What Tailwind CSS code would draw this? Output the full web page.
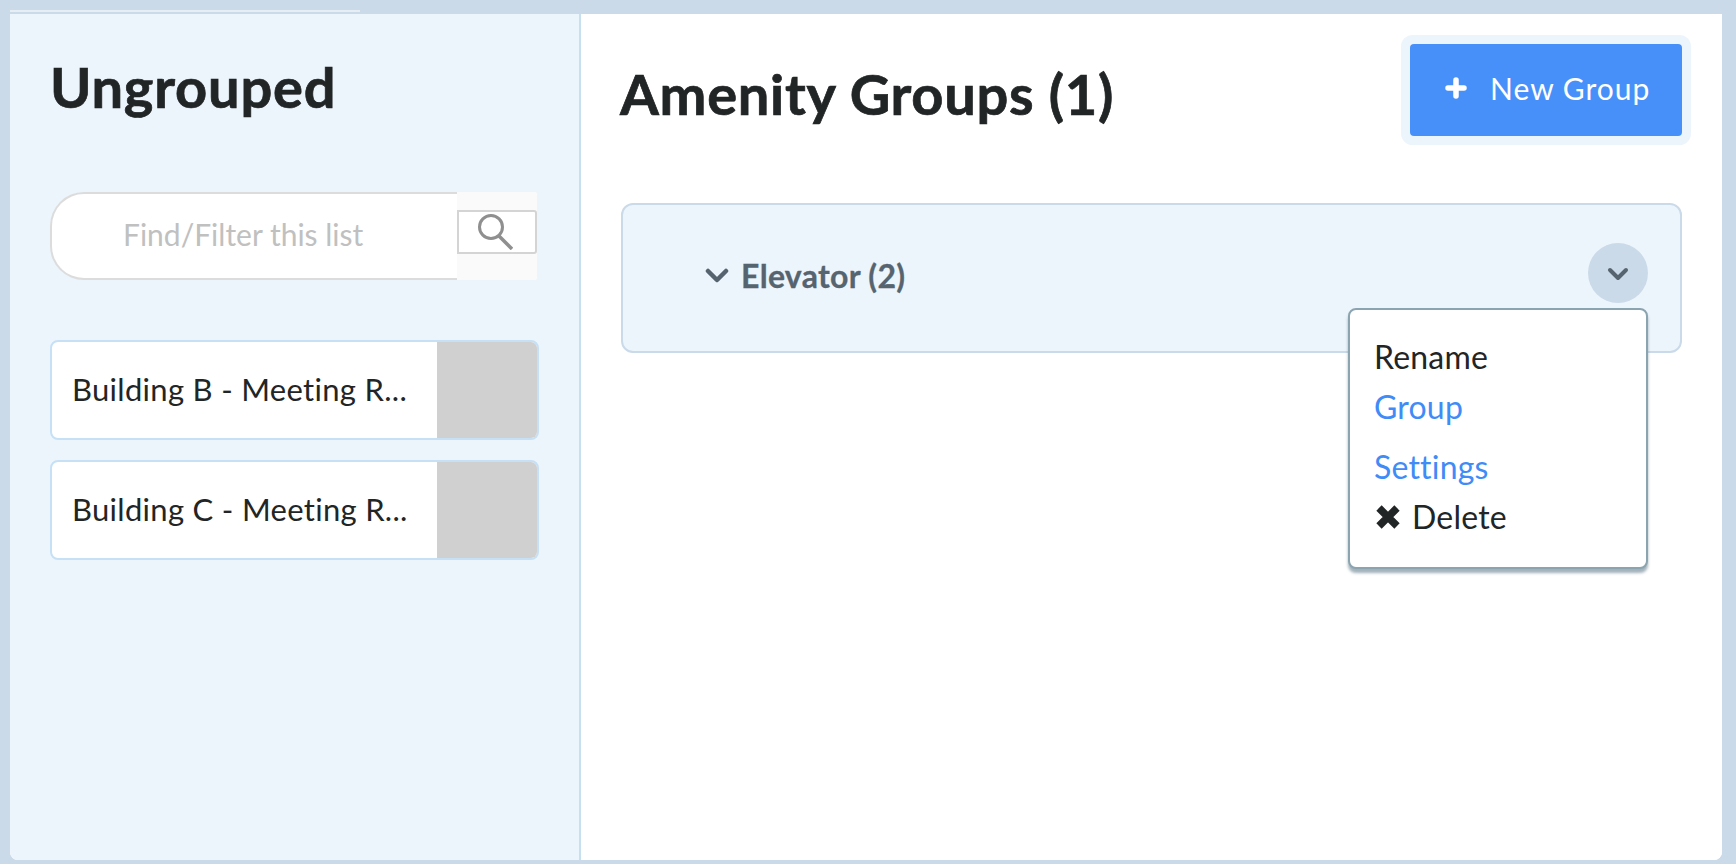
<!DOCTYPE html>
<html>
<head>
<meta charset="utf-8">
<script src="https://cdn.jsdelivr.net/npm/@tailwindcss/browser@4"></script>
</head>
<body class="m-0 bg-[#cbdae8] font-['Lato','Noto_Sans',sans-serif] text-[#222526] [font-variant-ligatures:none]">
<div class="relative w-[1736px] h-[864px] overflow-hidden pl-[10px] pr-[14px] pt-[14px] pb-[4px]">
  <div class="absolute left-[10px] top-[10px] w-[350px] h-[2px] bg-[#e6edf3]"></div>
  <div class="flex h-[846px] rounded-b-[8px] overflow-hidden bg-white">
    <aside class="w-[571px] shrink-0 bg-[#edf5fc] border-r-[2px] border-[#c6e0f0] pl-[40px]">
      <h2 class="h-[178px] pt-[43px] text-[56px] leading-[60px] font-bold tracking-[0.8px] [-webkit-text-stroke:0.7px_#222526]">Ungrouped</h2>
      <div class="flex h-[88px] w-[487px]">
        <div class="w-[407px] h-[88px] bg-white rounded-l-[34px] border-y-2 border-l-2 border-[#dcdcdc] pl-[71px] pb-[4px] flex items-center text-[30px] text-[#c0c0c0]">Find/Filter this list</div>
        <div class="w-[80px] h-[88px] bg-[#fafafa] rounded-r-[2px] pt-[18px]">
          <div class="w-full h-[44px] bg-white border-2 border-[#d4d4d4] rounded-r-[3px] flex items-center pl-[18px]">
            <svg width="36" height="36" viewBox="0 0 36 36" fill="none" stroke="#8f8f8f"><circle cx="14" cy="13" r="11.5" stroke-width="3"/><path d="M22 22 L35 35" stroke-width="3.5"/></svg>
          </div>
        </div>
      </div>
      <div class="mt-[60px] flex flex-col gap-[20px] w-[489px]">
        <div class="flex h-[100px] bg-white border-2 border-[#c6e0f5] rounded-[8px] overflow-hidden">
          <div class="w-[385px] pl-[20px] pb-[2px] flex items-center text-[31px] tracking-[0.3px] whitespace-nowrap">Building B - Meeting R...</div>
          <div class="flex-1 bg-[#d0d0d0]"></div>
        </div>
        <div class="flex h-[100px] bg-white border-2 border-[#c6e0f5] rounded-[8px] overflow-hidden">
          <div class="w-[385px] pl-[20px] pb-[2px] flex items-center text-[31px] tracking-[0.3px] whitespace-nowrap">Building C - Meeting R...</div>
          <div class="flex-1 bg-[#d0d0d0]"></div>
        </div>
      </div>
    </aside>
    <main class="flex-1 bg-white pl-[40px] pr-[40px] pt-[30px]">
      <div class="flex justify-between h-[92px] mb-[67px]">
        <h1 class="pt-[18px] text-[56px] leading-[64px] font-bold tracking-[0.7px] ml-[-1px] [-webkit-text-stroke:0.7px_#222526]">Amenity Groups (1)</h1>
        <button class="w-[272px] h-[92px] rounded-[4px] bg-[#4790f9] ring-[9px] ring-[#edf5fc] flex items-center pl-[35px] pb-[4px] text-white text-[30px] tracking-[1px]">
          <svg width="22" height="22" viewBox="0 0 22 22" class="mr-[23px]" fill="none" stroke="#fff" stroke-width="5.5" stroke-linecap="round"><path d="M11 3 V19 M3 11 H19"/></svg>
          New Group
        </button>
      </div>
      <div class="relative h-[150px] bg-[#edf5fc] border-2 border-[#cbdae8] rounded-[12px] flex items-center justify-between pl-[82px] pr-[32px]">
        <div class="flex items-center gap-[12px] text-[#56646f] text-[32px] font-bold [-webkit-text-stroke:0.3px_#56646f] mt-[-4px]">
          <svg width="24" height="16" viewBox="0 0 24 16" fill="none" stroke="#56646f" stroke-width="4.5" stroke-linecap="round" stroke-linejoin="round"><path d="M3 3 L12 12 L21 3"/></svg>
          <span class="tracking-[0.3px]">Elevator (2)</span>
        </div>
        <div class="w-[60px] h-[60px] mt-[-11px] rounded-full bg-[#cbdae8] flex items-center justify-center">
          <svg width="22" height="14" viewBox="0 0 22 14" fill="none" stroke="#56646f" stroke-width="4" stroke-linecap="round" stroke-linejoin="round" class="mt-[2px]"><path d="M3 3 L11 11 L19 3"/></svg>
        </div>
        <div class="absolute left-[725px] top-[103px] w-[300px] h-[261px] bg-white border-2 border-[#8aa4b0] rounded-[8px] shadow-[0_4px_3px_rgba(100,125,140,0.6)] pl-[24px] text-[32px] tracking-[0.2px] leading-[40px]">
          <div class="pt-[27px]">Rename</div>
          <div class="mt-[10px] text-[#3f8cf7]">Group</div>
          <div class="mt-[20px] text-[#3f8cf7]">Settings</div>
          <div class="mt-[10px] flex items-center">
            <svg width="26" height="26" viewBox="0 0 26 26" class="ml-[1px] mr-[11px]" fill="none" stroke="#222526" stroke-width="7.5"><path d="M4 4 L22 22 M22 4 L4 22"/></svg>
            Delete
          </div>
        </div>
      </div>
    </main>
  </div>
</div>
</body>
</html>
